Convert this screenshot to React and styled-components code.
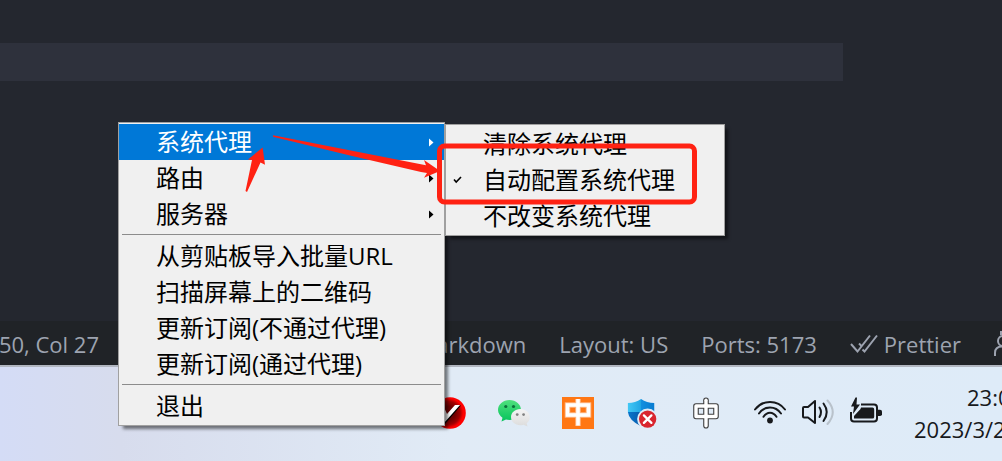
import React from 'react';
import styled, { createGlobalStyle } from 'styled-components';

const GlobalStyle = createGlobalStyle`
  * {
    box-sizing: border-box;
  }
  body {
    margin: 0;
    overflow: hidden;
    font-family: 'Open Sans', 'Noto Sans CJK SC', sans-serif;
  }
  button {
    font: inherit;
    color: inherit;
    border: 0;
    padding: 0;
    background: none;
  }
`;

const Screen = styled.div`
  position: relative;
  display: flex;
  flex-direction: column;
  min-height: 100vh;
  overflow: hidden;
`;

const Editor = styled.main`
  flex: 1;
  padding-top: 43px;
  background: #24272f;
`;

const CurrentLine = styled.div`
  width: 84.1%;
  height: 38px;
  background: #2e313c;
`;

const StatusBar = styled.footer`
  display: flex;
  align-items: center;
  justify-content: space-between;
  height: 44px;
  padding-top: 2px;
  color: #9da3b0;
  background: #202327;
  font-size: 22px;
  line-height: 32px;
  white-space: nowrap;
`;

const CursorPosition = styled.button`
  display: flex;
  justify-content: flex-end;
  width: 99px;
  overflow: hidden;
`;

const StatusGroup = styled.div`
  display: flex;
  align-items: center;
  gap: 33px;
`;

const StatusItem = styled.button`
  display: flex;
  align-items: center;
  gap: 6px;
`;

const FeedbackItem = styled.button`
  display: flex;
  width: 8px;
  overflow: hidden;
`;

const Taskbar = styled.section`
  display: flex;
  align-items: center;
  justify-content: flex-end;
  gap: 32px;
  height: 96px;
  padding-bottom: 2px;
  border-top: 2px solid #b1b6c0;
  background: linear-gradient(90deg, #d4dcf6 0%, #d7dced 12%, #e1ebf6 45%, #deebf8 100%);
`;

const TrayGroup = styled.div`
  display: flex;
  gap: ${props => props.$gap};
`;

const TrayButton = styled.button`
  display: flex;
  width: 32px;
  height: 32px;
`;

const Clock = styled.div`
  width: 88px;
  overflow: hidden;
  color: #17191c;
  font-size: 22px;
  line-height: 32px;
  white-space: nowrap;
`;

const ClockTime = styled.div`
  padding-left: 53px;
`;

const MenuLayer = styled.nav`
  position: absolute;
  left: 118px;
  bottom: 35px;
`;

const Menu = styled.ul`
  width: ${props => props.$width};
  margin: 0;
  padding: 1px 0;
  list-style: none;
  border: 1px solid #a0a0a0;
  background: #f0f0f0;
  box-shadow: 4px 4px 3px -1px rgba(0, 0, 0, 0.5);
`;

const SubMenuLayer = styled.div`
  position: absolute;
  left: 100%;
  top: 2px;
`;

const MenuItem = styled.button`
  display: grid;
  grid-template-columns: 37px 1fr 15px;
  align-items: center;
  width: 100%;
  height: 36px;
  color: ${props => (props.$active ? '#fff' : '#000')};
  background: ${props => (props.$active ? '#0078d7' : 'transparent')};
  font-size: 24px;
  line-height: 36px;
  text-align: left;
  white-space: nowrap;
`;

const Divider = styled.li`
  height: 6px;
  padding: 2px 3px;

  &::before {
    content: '';
    display: block;
    height: 1px;
    background: #8c8c8c;
  }
`;

const Annotation = styled.svg`
  position: absolute;
  left: 0;
  top: 0;
  pointer-events: none;
`;

const Slot = styled.span`
  display: flex;
  padding-left: ${props => props.$pad || 0};
`;

const FeedbackDrawing = styled.svg`
  flex-shrink: 0;
`;

const ArrowGlyph = () => (
  <svg width="5" height="9" viewBox="0 0 5 9">
    <path d="M0 0.5 L4.5 4.5 L0 8.5Z" fill="currentColor" />
  </svg>
);

const CheckGlyph = () => (
  <svg width="9" height="8" viewBox="0 0 9 8">
    <path d="M1 3.5 L3.2 6 L8 1" fill="none" stroke="#000" strokeWidth="1.6" />
  </svg>
);

const DoubleCheck = () => (
  <svg width="28" height="20" viewBox="0 0 28 20">
    <g fill="none" stroke="currentColor" strokeWidth="2">
      <path d="M1 10 L7.5 17.5 L20 1.5" />
      <path d="M9 9.5 L11.5 12 M12.5 15.5 L14.5 17.5 L27 1.5" />
    </g>
  </svg>
);

const FeedbackIcon = () => (
  <FeedbackDrawing width="24" height="26" viewBox="0 0 24 26">
    <g fill="none" stroke="currentColor" strokeWidth="2">
      <circle cx="9" cy="10" r="5" />
      <path d="M1 25 V22 Q1 15.5 8 15.5 M7 4 V1 H23" />
    </g>
  </FeedbackDrawing>
);

const V2rayIcon = () => (
  <svg width="32" height="32" viewBox="0 0 32 32">
    <defs>
      <radialGradient id="v2ray" cx="45%" cy="50%" r="52%">
        <stop offset="0.4" stopColor="#6d0000" />
        <stop offset="0.7" stopColor="#a00000" />
        <stop offset="0.9" stopColor="#ff0000" />
      </radialGradient>
    </defs>
    <circle cx="16" cy="16" r="15.8" fill="url(#v2ray)" />
    <path d="M3 9 H9 L13 19 L22 8.5 H27 L11 27Z" fill="#000" />
    <path d="M3 8 H9 L13 17 L21 8 H26 L10 26Z" fill="#fff" />
  </svg>
);

const WechatIcon = () => (
  <svg width="32" height="32" viewBox="0 0 32 32">
    <defs>
      <linearGradient id="wechat" x2="0" y2="1">
        <stop stopColor="#4fe07d" />
        <stop offset="1" stopColor="#06c45c" />
      </linearGradient>
      <linearGradient id="bubble" x2="0" y2="1">
        <stop stopColor="#f4f4f4" />
        <stop offset="1" stopColor="#dcdcdc" />
      </linearGradient>
    </defs>
    <path d="M11.5 3 C5 3 0 7.5 0 13 C0 16 2 19 4.5 20.8 L3.5 24.5 L8 22.4 C9 22.7 10 22.9 11.5 22.9 C18 22.9 23 18.5 23 13 C23 7.5 18 3 11.5 3Z" fill="url(#wechat)" />
    <circle cx="7.8" cy="9.5" r="1.6" fill="#0b713a" />
    <circle cx="15.5" cy="9.5" r="1.6" fill="#0b713a" />
    <path d="M22.3 12 C17 12 13 15.7 13 20 C13 24.7 17 28.2 22.3 28.2 C23.5 28.2 24.5 28.1 25.5 27.7 L29.5 29.5 L28.7 26.2 C30.7 24.7 31.8 22.5 31.8 20 C31.8 15.7 27.5 12 22.3 12Z" fill="url(#bubble)" />
    <circle cx="19.2" cy="17.6" r="1.4" fill="#818181" />
    <circle cx="25.6" cy="17.6" r="1.4" fill="#818181" />
  </svg>
);

const OrangeImeIcon = () => (
  <svg width="32" height="32" viewBox="0 0 32 32">
    <rect width="32" height="32" fill="#ff7714" />
    <g fill="none" stroke="#ffb887" strokeWidth="5.5">
      <rect x="5.5" y="8" width="21" height="10" />
      <path d="M16 2 V29" />
    </g>
    <g fill="none" stroke="#fff" strokeWidth="3.6">
      <rect x="5.5" y="8" width="21" height="10" />
      <path d="M16 2 V28.5" />
    </g>
  </svg>
);

const ShieldIcon = () => (
  <svg width="34" height="32" viewBox="0 0 34 32">
    <defs>
      <linearGradient id="shieldTop">
        <stop stopColor="#42c8f5" />
        <stop offset="0.5" stopColor="#20a5e4" />
        <stop offset="0.5" stopColor="#1490df" />
        <stop offset="1" stopColor="#087bd0" />
      </linearGradient>
      <linearGradient id="shieldBottom">
        <stop stopColor="#0975cb" />
        <stop offset="0.5" stopColor="#075cad" />
        <stop offset="0.5" stopColor="#16a0e6" />
        <stop offset="1" stopColor="#2abaf1" />
      </linearGradient>
    </defs>
    <path d="M2 5.5 Q10 5.5 16 1.2 Q22 5.5 30 5.5 V15 H2Z" fill="url(#shieldTop)" />
    <path d="M2 15 H30 Q29 24 16 30 Q3 24 2 15Z" fill="url(#shieldBottom)" />
    <circle cx="23" cy="22.5" r="11.2" fill="#e1ebf6" />
    <circle cx="23" cy="22.5" r="9.2" fill="#d9252e" />
    <path d="M19 18.5 L27 26.5 M27 18.5 L19 26.5" stroke="#fff" strokeWidth="2.4" strokeLinecap="round" />
  </svg>
);

const ImeIcon = () => (
  <svg width="32" height="32" viewBox="0 0 32 32">
    <g fill="none" strokeLinecap="round" strokeLinejoin="round">
      <g stroke="#3d3d3d" strokeWidth="5.6">
        <rect x="6" y="9" width="20" height="10.5" />
        <path d="M16 3.3 V28.7" />
      </g>
      <g stroke="#fff" strokeWidth="3.4">
        <rect x="6" y="9" width="20" height="10.5" />
        <path d="M16 3.3 V28.7" />
      </g>
    </g>
  </svg>
);

const WifiIcon = () => (
  <svg width="32" height="32" viewBox="0 0 32 32">
    <g fill="none" stroke="#17191c" strokeWidth="2" strokeLinecap="round">
      <path d="M1 12.5 C8.5 2.5 23.5 2.5 31 12.5" />
      <path d="M5 16.5 C10.5 8.5 21.5 8.5 27 16.5" />
      <path d="M9.5 19.8 C13 14.4 19 14.4 22.5 19.8" />
    </g>
    <circle cx="16" cy="23.5" r="2.9" fill="#17191c" />
  </svg>
);

const SpeakerIcon = () => (
  <svg width="32" height="32" viewBox="0 0 32 32">
    <g fill="none" stroke="#17191c" strokeWidth="2" strokeLinecap="round" strokeLinejoin="round">
      <path d="M1 11 Q1 10 2 10 H6 L13 4 V26 L6 20.5 H2 Q1 20.5 1 19.5Z" />
      <path d="M17.5 10.5 Q20.5 15.2 17.5 20" />
      <path d="M21.5 6.5 Q28 15.2 21.5 24" />
      <path d="M25.5 3.5 Q36 15.2 25.5 27" stroke="#b9c2cb" />
    </g>
  </svg>
);

const BatteryIcon = () => (
  <svg width="32" height="32" viewBox="0 0 32 32">
    <path d="M11 7.5 H24 Q27 7.5 27 10.5 V21.5 Q27 24.5 24 24.5 H4 Q1 24.5 1 21.5 V15" fill="none" stroke="#17191c" strokeWidth="2" />
    <path d="M11 10.5 H22.5 Q24.2 10.5 24.2 12.5 V19.7 Q24.2 21.6 22.5 21.6 H4 V19 L10.5 12Z" fill="#17191c" />
    <path d="M28 12.8 H30 Q32 12.8 32 14.5 V17.2 Q32 19 30 19 H28Z" fill="#17191c" />
    <path d="M5.5 0.5 L1 9.5 H4 L3 17 L10 7.5 H6.5 L7 0.5Z" fill="#17191c" />
  </svg>
);

const trayApps = [
  { label: 'v2rayN', Icon: V2rayIcon },
  { label: 'WeChat', Icon: WechatIcon },
  { label: 'Input method', Icon: OrangeImeIcon },
  { label: 'Windows Security', Icon: ShieldIcon },
  { label: 'Input mode', Icon: ImeIcon },
];

const trayStatus = [
  { label: 'Network', Icon: WifiIcon },
  { label: 'Volume', Icon: SpeakerIcon },
  { label: 'Battery', Icon: BatteryIcon },
];

const menuGroups = [
  [
    { text: '系统代理', arrow: true, active: true },
    { text: '路由', arrow: true },
    { text: '服务器', arrow: true },
  ],
  [
    { text: '从剪贴板导入批量URL' },
    { text: '扫描屏幕上的二维码' },
    { text: '更新订阅(不通过代理)' },
    { text: '更新订阅(通过代理)' },
  ],
  [{ text: '退出' }],
];

const proxyItems = [
  { text: '清除系统代理' },
  { text: '自动配置系统代理', checked: true },
  { text: '不改变系统代理' },
];

const Entry = ({ text, arrow, active, checked }) => (
  <li>
    <MenuItem type="button" $active={active}>
      <Slot $pad="7px">{checked && <CheckGlyph />}</Slot>
      <span>{text}</span>
      <Slot>{arrow && <ArrowGlyph />}</Slot>
    </MenuItem>
  </li>
);

const Tray = ({ items, gap }) => (
  <TrayGroup $gap={gap}>
    {items.map(({ label, Icon }) => (
      <TrayButton key={label} type="button" aria-label={label}>
        <Icon />
      </TrayButton>
    ))}
  </TrayGroup>
);

export default function App() {
  return (
    <>
      <GlobalStyle />
      <Screen>
        <Editor>
          <CurrentLine />
        </Editor>
        <StatusBar>
          <CursorPosition type="button">50, Col 27</CursorPosition>
          <StatusGroup>
            <StatusItem type="button">Markdown</StatusItem>
            <StatusItem type="button">Layout: US</StatusItem>
            <StatusItem type="button">Ports: 5173</StatusItem>
            <StatusItem type="button">
              <DoubleCheck />
              Prettier
            </StatusItem>
            <FeedbackItem type="button" aria-label="Feedback">
              <FeedbackIcon />
            </FeedbackItem>
          </StatusGroup>
        </StatusBar>
        <Taskbar>
          <Tray items={trayApps} gap="32px" />
          <Tray items={trayStatus} gap="16px" />
          <Clock>
            <ClockTime>23:0</ClockTime>
            <div>2023/3/2</div>
          </Clock>
        </Taskbar>
        <MenuLayer>
          <Menu $width="327px">
            {menuGroups.map((group, i) => (
              <React.Fragment key={group[0].text}>
                {i > 0 && <Divider role="separator" />}
                {group.map(item => (
                  <Entry key={item.text} {...item} />
                ))}
              </React.Fragment>
            ))}
          </Menu>
          <SubMenuLayer>
            <Menu $width="280px">
              {proxyItems.map(item => (
                <Entry key={item.text} {...item} />
              ))}
            </Menu>
          </SubMenuLayer>
          {/* hand-drawn arrows and frame around the proxy option */}
          <Annotation width="600" height="304" viewBox="118 122 600 304">
            <g fill="#ff2213">
              <path d="M273 135.3 L426 165.3 L424 160 L440 171 L424 177.8 L427 173 L421 172 L350 155.5 L273 136.8Z" />
              <path d="M245.5 191 L252 160 L248 159.5 L262.6 147.5 L265 164.8 L260.5 162.5 L247 192Z" />
            </g>
            <rect x="439.5" y="146" width="255" height="56" rx="5" fill="none" stroke="#ff2213" strokeWidth="5" />
          </Annotation>
        </MenuLayer>
      </Screen>
    </>
  );
}
